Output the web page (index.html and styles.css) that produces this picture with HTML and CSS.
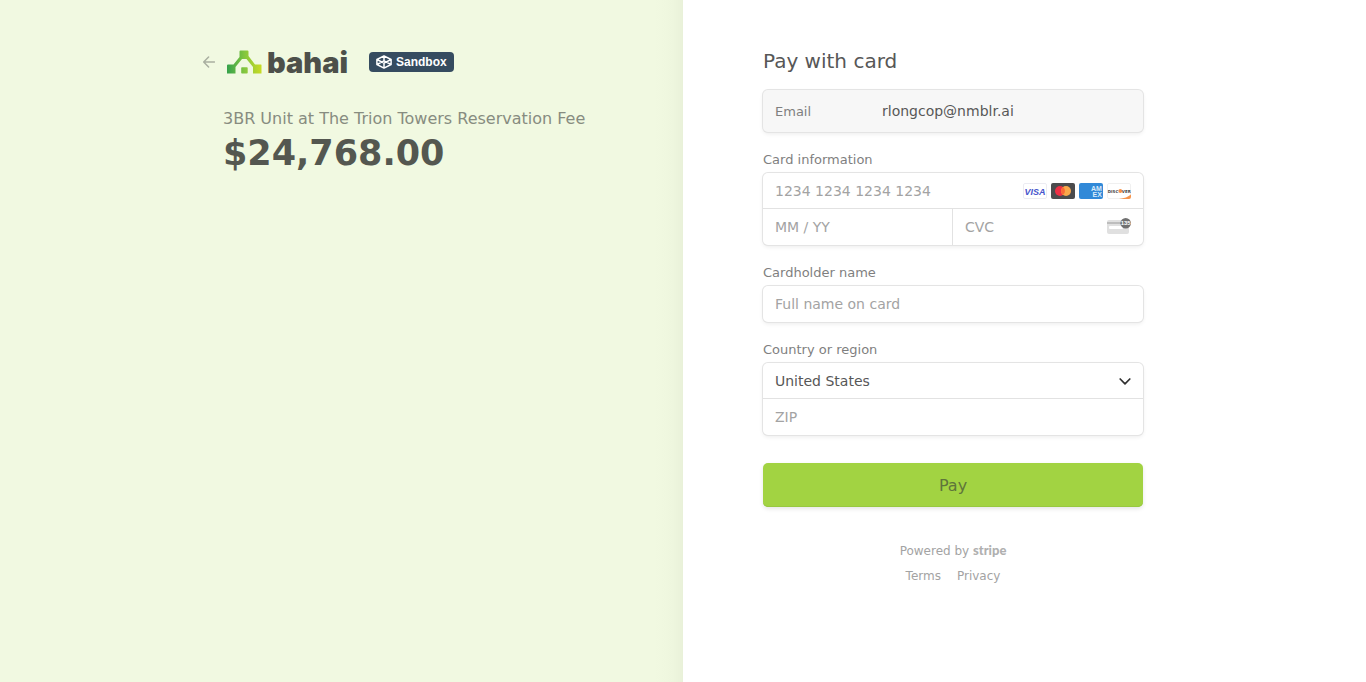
FILE: index.html
```
<!DOCTYPE html>
<html lang="en">
<head>
<meta charset="utf-8">
<meta name="viewport" content="width=device-width, initial-scale=1">
<title>Bahai checkout</title>
<link rel="stylesheet" href="styles.css">
</head>
<body>
<div class="app">
  <section class="overview">
    <div class="column">
      <header class="business">
        <a class="back" href="#" aria-label="Back">
          <svg width="12" height="12" viewBox="0 0 12 12" fill="none" stroke="currentColor" stroke-width="1.5" stroke-linecap="round" stroke-linejoin="round"><path d="M11.500 6H.8M5.600 1L.7 6l4.900 5"/></svg>
        </a>
        <a class="brand" href="#">
          <svg width="35" height="24" viewBox="0 0 35 24" aria-hidden="true">
            <defs>
              <linearGradient id="roof" gradientUnits="userSpaceOnUse" x1="0" y1="0" x2="35" y2="0">
                <stop offset="0" stop-color="#35a24b"/><stop offset=".5" stop-color="#83c63f"/><stop offset="1" stop-color="#cbdc22"/>
              </linearGradient>
            </defs>
            <g fill="url(#roof)">
              <path d="M13.500.5h7q1 0 1 1V6l6.500 8.500H34q.5 0 .5.500v8.500H26V17l-6.500-8h-4.500L8.500 17v6.500H0V15.500q0-1 1-1h5.500L12.500 7V1.500q0-1 1-1z"/>
              <rect x="14.200" y="17.200" width="6.500" height="6.300" rx=".8"/>
            </g>
          </svg>
          <span class="brand-name">bahai</span>
        </a>
        <span class="badge">
          <svg width="16" height="14" viewBox="0 0 16 14" fill="none" stroke="currentColor" stroke-width="1.500" stroke-linejoin="round"><path d="M8 .9l7.100 3.600v5L8 13.100.9 9.500v-5zM.9 4.500L8 8.200l7.100-3.700M.9 9.500L8 5.800l7.100 3.700M8 .9v4.900M8 8.200v4.900"/></svg>
          Sandbox
        </span>
      </header>
      <p class="product">3BR Unit at The Trion Towers Reservation Fee</p>
      <p class="price">$24,768.00</p>
    </div>
  </section>
  <main class="payment">
    <div class="column">
      <form>
        <h1 class="title">Pay with card</h1>
        <div class="box email"><span class="email-label">Email</span><span class="email-value">rlongcop@nmblr.ai</span></div>

        <label class="label" for="number">Card information</label>
        <div class="box">
          <div class="row">
            <input class="input" id="number" type="text" placeholder="1234 1234 1234 1234">
            <div class="cards" aria-hidden="true">
              <svg width="24" height="16" viewBox="0 0 24 16"><rect x=".5" y=".5" width="23" height="15" rx="1.500" fill="#fff" stroke="#ececf2"/><text class="visa" x="12" y="11.500" text-anchor="middle">VISA</text></svg>
              <svg width="24" height="16" viewBox="0 0 24 16"><rect width="24" height="16" rx="2" fill="#4b4b4d"/><circle cx="9" cy="8" r="5" fill="#ee2f45"/><circle cx="15" cy="8" r="5" fill="#faa84a"/><path d="M12 4a5 5 0 0 1 0 8 5 5 0 0 1 0-8z" fill="#fb6a35"/></svg>
              <svg width="24" height="16" viewBox="0 0 24 16"><rect width="24" height="16" rx="2" fill="#3189d8"/><text class="amex" x="12" y="7.800">AM</text><text class="amex" x="13.500" y="14.200">EX</text></svg>
              <svg width="24" height="16" viewBox="0 0 24 16"><rect x=".5" y=".5" width="23" height="15" rx="1.500" fill="#fff" stroke="#f0f0f0"/><path d="M24 11.500V14a2 2 0 0 1-2 2H12q8-1 12-4.500z" fill="#f6934b"/><text class="discover" x=".8" y="9.700">DISC</text><circle cx="13.300" cy="8" r="1.900" fill="#f6934b"/><text class="discover" x="14.800" y="9.700">VER</text></svg>
            </div>
          </div>
          <div class="row split">
            <div class="cell"><input class="input" type="text" placeholder="MM / YY" aria-label="Expiration"></div>
            <div class="cell">
              <input class="input" type="text" placeholder="CVC" aria-label="CVC">
              <svg class="cvc" width="24" height="18" viewBox="0 0 24 18" aria-hidden="true"><rect y="2" width="22" height="14" rx="2" fill="#e0e0e0"/><path d="M0 4h22v2H0z" fill="#bdbdbd"/><rect x="2" y="8" width="14" height="3" rx="1" fill="#fff"/><circle cx="18.700" cy="5.300" r="5.300" fill="#707070"/><text class="code" x="18.700" y="7.300" text-anchor="middle">135</text></svg>
            </div>
          </div>
        </div>

        <label class="label" for="name">Cardholder name</label>
        <div class="box"><div class="row"><input class="input" id="name" type="text" placeholder="Full name on card"></div></div>

        <label class="label" for="country">Country or region</label>
        <div class="box">
          <div class="row select-row">
            <select class="input select" id="country"><option>United States</option></select>
            <svg class="chevron" width="12" height="8" viewBox="0 0 12 8" fill="none" stroke="#303030" stroke-width="1.700" stroke-linecap="round" stroke-linejoin="round" aria-hidden="true"><path d="M1.200 2l4.800 4.800L10.800 2"/></svg>
          </div>
          <div class="row"><input class="input" type="text" placeholder="ZIP" aria-label="ZIP"></div>
        </div>

        <button class="pay" type="button">Pay</button>
      </form>
      <footer class="footer">
        <div class="powered">Powered by <span class="stripe">stripe</span></div>
        <nav class="links"><a href="#">Terms</a><a href="#">Privacy</a></nav>
      </footer>
    </div>
  </main>
</div>
</body>
</html>
```
FILE: styles.css
```
* { box-sizing: border-box; }

body {
  margin: 0;
  background: #fff;
  color: #575757;
  font-family: "DejaVu Sans", sans-serif;
  font-size: 14px;
}

svg { display: block; flex: none; }
a { color: inherit; text-decoration: none; }

.app {
  display: grid;
  grid-template-columns: 1fr 1fr;
  min-height: 100vh;
}

.overview {
  display: flex;
  justify-content: flex-end;
  padding: 47px 80px;
  background: linear-gradient(to left, #e9f1d9, #eef6de 10px, #f1f9e1 28px);
}

.payment { padding: 47px 80px; }
.column { width: 100%; max-width: 380px; }

.business {
  display: flex;
  align-items: center;
  height: 30px;
  margin-left: -20px;
}
.back { color: #a9afa0; }
.brand {
  display: flex;
  align-items: center;
  gap: 5px;
  margin: 0 21px 0 12px;
  color: #4d504a;
}
.brand-name {
  font-family: Inter, sans-serif;
  font-size: 29px;
  font-weight: 900;
  line-height: 26px;
  padding-top: 2px;
}
.badge {
  display: flex;
  align-items: center;
  gap: 4px;
  height: 20px;
  padding: 0 7px;
  border-radius: 4px;
  background: #364c60;
  color: #fff;
  font: bold 12px "Liberation Sans", sans-serif;
}

.product {
  margin: 30px 0 0;
  color: #878c80;
  font-size: 16px;
  line-height: 24px;
}
.price {
  margin: 0;
  color: #545750;
  font-size: 35px;
  font-weight: bold;
  line-height: 44px;
}

.title {
  margin: 0 0 15px;
  font-size: 20px;
  font-weight: normal;
  line-height: 28px;
}

.box {
  border-radius: 5px;
  background: #fff;
  box-shadow: 0 0 0 1px #e4e4e4, 0 2px 4px rgba(0, 0, 0, .08);
}
.email {
  display: flex;
  align-items: center;
  height: 42px;
  padding: 0 12px;
  background: #f7f7f7;
}
.email-label { width: 107px; color: #7f7f7f; font-size: 13px; }

.label {
  display: block;
  margin: 19px 0 4px;
  color: #7f7f7f;
  font-size: 13px;
  line-height: 18px;
}

.row {
  display: flex;
  align-items: center;
  height: 36px;
}
.row + .row { border-top: 1px solid #e2e2e2; height: 37px; margin-top: -1px; }
.cell { display: flex; flex: 1; align-items: center; min-width: 0; height: 100%; }
.cell:first-child { border-right: 1px solid #e2e2e2; }

.input {
  flex: 1;
  width: 100%;
  min-width: 0;
  height: 100%;
  padding: 0 12px;
  border: 0;
  outline: 0;
  background: none;
  color: #575757;
  font: inherit;
}
.input::placeholder { color: #a3a3a3; opacity: 1; }

.cards { display: flex; gap: 4px; margin-right: 12px; }
.cvc { margin-right: 12px; }

.split { display: grid; grid-template-columns: 1fr 1fr; }
.select-row { display: grid; }
.select {
  grid-area: 1 / 1;
  appearance: none;
}
.chevron {
  grid-area: 1 / 1;
  justify-self: end;
  margin-right: 12px;
  pointer-events: none;
}

.visa { fill: #4654cc; font: italic bold 9px "Liberation Sans", sans-serif; }
.amex { fill: #d9ebfa; font: bold 7px "Liberation Sans", sans-serif; }
.discover { fill: #444; font: bold 4px "DejaVu Sans", sans-serif; }
.code { fill: #fff; font: bold 6px "Liberation Sans", sans-serif; }

.pay {
  display: block;
  width: 100%;
  height: 44px;
  margin-top: 28px;
  border: 0;
  border-radius: 5px;
  background: #a2d342;
  color: #5f753b;
  font: 16px "DejaVu Sans", sans-serif;
  box-shadow: inset 0 -1px 0 #97c840, 0 2px 4px rgba(0, 0, 0, .1);
}

.footer {
  margin-top: 35px;
  color: #a3a3a3;
  font-size: 12px;
  line-height: 18px;
  text-align: center;
}
.powered { height: 18px; }
.stripe { color: #b0b0b0; font: 900 13px/16px Lato, sans-serif; }
.links { display: flex; justify-content: center; gap: 16px; margin-top: 7px; }
```
